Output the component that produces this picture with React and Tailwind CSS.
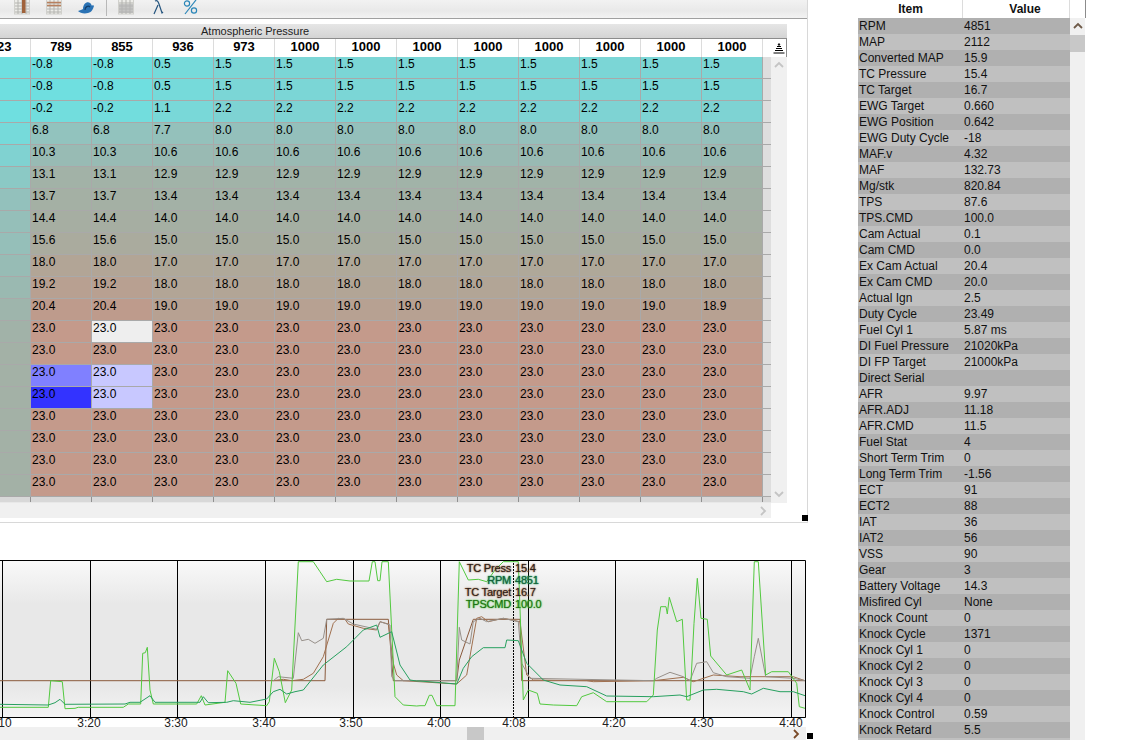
import React from 'react'

const FONT = 'font-["Liberation_Sans",Arial,sans-serif]'

const headers = [789, 855, 936, 973, 1000, 1000, 1000, 1000, 1000, 1000, 1000, 1000]

// [col 789/855, col 936, rest of the row]
const rows = [
    [-0.8, 0.5, 1.5],
    [-0.8, 0.5, 1.5],
    [-0.2, 1.1, 2.2],
    [6.8, 7.7, 8.0],
    [10.3, 10.6, 10.6],
    [13.1, 12.9, 12.9],
    [13.7, 13.4, 13.4],
    [14.4, 14.0, 14.0],
    [15.6, 15.0, 15.0],
    [18.0, 17.0, 17.0],
    [19.2, 18.0, 18.0],
    [20.4, 19.0, 19.0],
    [23.0, 23.0, 23.0],
    [23.0, 23.0, 23.0],
    [23.0, 23.0, 23.0],
    [23.0, 23.0, 23.0],
    [23.0, 23.0, 23.0],
    [23.0, 23.0, 23.0],
    [23.0, 23.0, 23.0],
    [23.0, 23.0, 23.0],
]

const leftCol = [-0.8, -0.8, -0.8, 0.6, 2.6, 5.2, 7.6, 8.6, 8.4, 10, 11, 12, 13, 13.4, 13.4, 13.4, 13.4, 13.4, 13.4, 13.4]

const stops = [
    [-0.8, 111, 223, 224],
    [1.5, 123, 214, 214],
    [6.8, 146, 195, 190],
    [10.3, 152, 187, 180],
    [14, 165, 175, 163],
    [18, 178, 165, 150],
    [20.4, 190, 155, 140],
    [23, 196, 154, 139],
]

function heat(v) {
    for (let i = 1; i < stops.length; i++) {
        if (v <= stops[i][0]) {
            const a = stops[i - 1]
            const b = stops[i]
            const t = (v - a[0]) / (b[0] - a[0])
            const c = [1, 2, 3].map((k) => Math.round(a[k] + (b[k] - a[k]) * t))
            return `rgb(${c.join(',')})`
        }
    }
    return 'rgb(196,154,139)'
}

const selected = {
    '12-1': '#eeeeee',
    '14-0': '#8080ff',
    '14-1': '#c8c8ff',
    '15-0': '#3333ff',
    '15-1': '#c8c8ff',
}

const items = [
    ['RPM', '4851'], ['MAP', '2112'], ['Converted MAP', '15.9'], ['TC Pressure', '15.4'],
    ['TC Target', '16.7'], ['EWG Target', '0.660'], ['EWG Position', '0.642'], ['EWG Duty Cycle', '-18'],
    ['MAF.v', '4.32'], ['MAF', '132.73'], ['Mg/stk', '820.84'], ['TPS', '87.6'],
    ['TPS.CMD', '100.0'], ['Cam Actual', '0.1'], ['Cam CMD', '0.0'], ['Ex Cam Actual', '20.4'],
    ['Ex Cam CMD', '20.0'], ['Actual Ign', '2.5'], ['Duty Cycle', '23.49'], ['Fuel Cyl 1', '5.87 ms'],
    ['DI Fuel Pressure', '21020kPa'], ['DI FP Target', '21000kPa'], ['Direct Serial', ''], ['AFR', '9.97'],
    ['AFR.ADJ', '11.18'], ['AFR.CMD', '11.5'], ['Fuel Stat', '4'], ['Short Term Trim', '0'],
    ['Long Term Trim', '-1.56'], ['ECT', '91'], ['ECT2', '88'], ['IAT', '36'],
    ['IAT2', '56'], ['VSS', '90'], ['Gear', '3'], ['Battery Voltage', '14.3'],
    ['Misfired Cyl', 'None'], ['Knock Count', '0'], ['Knock Cycle', '1371'], ['Knock Cyl 1', '0'],
    ['Knock Cyl 2', '0'], ['Knock Cyl 3', '0'], ['Knock Cyl 4', '0'], ['Knock Control', '0.59'],
    ['Knock Retard', '5.5'],
]

// chart traces, read off 3x crops: a = left crop (x 0), b = right crop (x 420)
const toPoints = (a, b) =>
    [
        ...a.map(([x, y]) => `${(x / 3).toFixed(1)},${(550 + y / 3).toFixed(1)}`),
        ...b.map(([x, y]) => `${(420 + x / 3).toFixed(1)},${(550 + y / 3).toFixed(1)}`),
    ].join(' ')

const tpsLine = toPoints(
    [[0, 472], [145, 472], [152, 392], [187, 395], [195, 476], [225, 475], [235, 472], [370, 472], [385, 462], [422, 462], [428, 310], [436, 308], [442, 292], [450, 420], [460, 462], [590, 462], [604, 437], [615, 465], [675, 457], [683, 362], [708, 400], [722, 462], [800, 467], [808, 455], [823, 325], [838, 365], [856, 458], [875, 420], [895, 35], [940, 35], [960, 65], [980, 95], [1010, 88], [1050, 93], [1107, 93], [1117, 35], [1125, 35], [1133, 92], [1140, 92], [1146, 35], [1165, 35], [1185, 440], [1210, 465], [1250, 468]],
    [[0, 467], [15, 467], [28, 436], [36, 436], [50, 467], [105, 467], [118, 35], [145, 90], [175, 88], [200, 95], [225, 60], [250, 35], [295, 35], [310, 450], [325, 420], [352, 430], [360, 462], [400, 465], [470, 467], [485, 440], [520, 428], [560, 455], [680, 455], [700, 435], [712, 240], [722, 170], [738, 170], [742, 192], [748, 142], [770, 215], [787, 208], [800, 450], [810, 450], [822, 220], [832, 85], [843, 205], [862, 208], [872, 318], [920, 375], [965, 360], [990, 420], [1003, 35], [1015, 35], [1037, 375], [1055, 365], [1105, 365], [1130, 400], [1138, 470], [1155, 475]],
)

const rpmLine = toPoints(
    [[0, 463], [145, 465], [165, 458], [180, 448], [195, 463], [375, 462], [390, 457], [420, 457], [450, 437], [465, 457], [600, 457], [610, 440], [625, 458], [680, 457], [700, 452], [750, 457], [800, 447], [820, 425], [840, 418], [860, 432], [885, 425], [910, 420], [970, 345], [1040, 290], [1090, 240], [1130, 225], [1140, 262], [1175, 245], [1200, 345], [1230, 390], [1250, 393]],
    [[0, 393], [110, 402], [130, 355], [155, 320], [190, 293], [255, 293], [260, 270], [295, 272], [320, 340], [370, 390], [420, 405], [500, 410], [560, 438], [700, 440], [780, 435], [800, 440], [850, 420], [890, 418], [970, 425], [995, 432], [1030, 415], [1080, 425], [1120, 425], [1155, 437]],
)

const targetLine = toPoints(
    [[0, 392], [975, 392], [980, 208], [1165, 208], [1180, 392], [1250, 392]],
    [[0, 392], [110, 392], [118, 330], [160, 208], [300, 208], [305, 392], [1155, 392]],
)

const pressLine = toPoints(
    [[820, 392], [835, 380], [880, 385], [895, 248], [905, 272], [925, 268], [945, 280], [970, 265], [980, 208], [1030, 205], [1060, 222], [1130, 238], [1140, 215], [1170, 225], [1175, 380], [1185, 392]],
    [[110, 392], [118, 232], [125, 270], [150, 282], [160, 215], [180, 205], [200, 215], [250, 205], [295, 215], [305, 340], [330, 385], [700, 392], [710, 385], [750, 367], [790, 380], [810, 392], [830, 340], [860, 335], [880, 368], [920, 380], [990, 385], [1003, 320], [1015, 265], [1037, 380], [1120, 385], [1155, 392]],
)

const actualLine = toPoints(
    [[820, 392], [850, 388], [875, 392], [910, 388], [940, 370], [970, 320], [1000, 220], [1015, 205], [1035, 208], [1045, 222], [1090, 235], [1130, 240], [1140, 215], [1165, 222], [1180, 340], [1190, 375], [1210, 392]],
    [[110, 402], [140, 375], [170, 205], [185, 200], [205, 215], [250, 205], [300, 215], [320, 375], [340, 390], [500, 392], [520, 395], [700, 392], [790, 382], [820, 395], [880, 375], [960, 380], [1120, 380], [1155, 392]],
)

const gridX = [2.5, 90.5, 177.5, 265.5, 353.5, 440.5, 528.5, 615.5, 703.5, 791.5]
const axisLabels = [[5, '10'], [89, '3:20'], [176, '3:30'], [264, '3:40'], [351, '3:50'], [439, '4:00'], [514, '4:08'], [614, '4:20'], [702, '4:30'], [791, '4:40']]

function Chevron({ dir = 'up', className = '' }) {
    const d = { up: 'M1 6 L5 2 L9 6', down: 'M1 2 L5 6 L9 2', right: 'M2 1 L6 5 L2 9' }[dir]
    return (
        <svg width="10" height="10" viewBox="0 0 10 10" className={className}>
            <path d={d} fill="none" stroke="currentColor" strokeWidth="1.8" />
        </svg>
    )
}

function GridIcon({ children }) {
    return (
        <svg width="16" height="15" viewBox="0 0 16 15">
            <rect x="0.5" y="-2" width="15" height="16" fill="#ecece8" stroke="#d0d0cc" />
            <path d="M1 3H15M1 6H15M1 9H15M1 12H15M4 0V14M8 0V14M12 0V14" stroke="#b4b4b0" strokeWidth="1" />
            {children}
        </svg>
    )
}

function Toolbar() {
    return (
        <div className="flex h-[19px] shrink-0 items-start border-b border-[#a0a0a0] bg-[linear-gradient(#f2f2f2,#e9e9e9_60%,#f3f3f3)]">
            <div className="ml-[14px]">
                <GridIcon>
                    <rect x="8" y="0" width="3.5" height="13" fill="#a0623a" />
                </GridIcon>
            </div>
            <div className="ml-[16px]">
                <GridIcon>
                    <path d="M1 2.5H15M1 5.5H15" stroke="#b8805e" strokeWidth="1.4" />
                </GridIcon>
            </div>
            <svg width="16" height="15" viewBox="0 0 16 15" className="ml-[16px]">
                <path d="M0 11 C2 10 4 10 5 9 C5 4 9 1 12 3 C14 4 13 7 15 5 L16 6 C15 9 14 12 10 13 C6 14 2 13 0 11Z" fill="#2a72b4" />
                <path d="M7 10 C7 7 10 5 12 7" fill="none" stroke="#123f6e" strokeWidth="1.2" />
            </svg>
            <div className="ml-[12px] h-[16px] w-px bg-[#b8b8b8]" />
            <div className="ml-[11px]">
                <GridIcon>
                    <rect x="1" y="4" width="14" height="9" fill="#b4b4b4" opacity="0.7" />
                </GridIcon>
            </div>
            <svg width="11" height="15" viewBox="0 0 11 15" className="ml-[19px]">
                <path d="M2 1 C4 0 5 1 6 4 L9 13 L10 12 M5 5 L1 14" fill="none" stroke="#24547e" strokeWidth="1.2" />
            </svg>
            <svg width="15" height="15" viewBox="0 0 15 15" className="ml-[19px]">
                <path d="M13 0 L2 14" stroke="#2a86b8" strokeWidth="1.2" />
                <circle cx="4" cy="3.5" r="2.6" fill="none" stroke="#2a86b8" strokeWidth="1.2" />
                <circle cx="11" cy="10.5" r="2.6" fill="none" stroke="#2a86b8" strokeWidth="1.2" />
            </svg>
        </div>
    )
}

function PressureTable() {
    return (
        <div className="mt-[5px] w-[787px]">
            <div className="h-[15px] border-b border-[#8c8c8c] bg-[linear-gradient(#e6e6e6,#d4d4d4)] pl-[201px] text-[11px] leading-[14px] text-[#222]">
                Atmospheric Pressure
            </div>
            <div className="flex h-[18px] bg-white text-[13px] font-bold leading-[16px] text-black">
                <div className="w-[31px] overflow-hidden border-r border-[#dcdcdc]">
                    <span className="-ml-[3px] block">23</span>
                </div>
                {headers.map((h, i) => (
                    <div key={i} className="w-[61px] border-r border-[#dcdcdc] text-center">
                        {h}
                    </div>
                ))}
                <div className="w-[8px]" />
                <div className="flex w-[16px] items-center justify-center border-r border-[#8c8c8c]">
                    <svg width="12" height="11" viewBox="0 0 12 11">
                        <path d="M6 0.5L7 2H5ZM4 3.5H8M3 5.5H9M2 7.5H10M0.5 10H11.5" stroke="#000" strokeWidth="1" fill="none" />
                    </svg>
                </div>
            </div>
            <div className="flex">
                <div className="w-[771px]">
                    {rows.map((row, r) => (
                        <div key={r} className="flex h-[22px] text-[12px] leading-[14px] text-black">
                            <div
                                className="w-[31px] border-r border-b border-[#a9a9a9]"
                                style={{ backgroundColor: heat(leftCol[r]) }}
                            />
                            {headers.map((_, c) => {
                                const v = c < 2 ? row[0] : c === 2 ? row[1] : r === 11 && c === 11 ? 18.9 : row[2]
                                return (
                                    <div
                                        key={c}
                                        className="w-[61px] border-r border-b border-[#a9a9a9] pl-[1px]"
                                        style={{ backgroundColor: selected[`${r}-${c}`] || heat(v) }}
                                    >
                                        {v.toFixed(1)}
                                    </div>
                                )
                            })}
                            <div className="w-[8px] border-b border-[#a9a9a9] bg-[#dedede]" />
                        </div>
                    ))}
                    <div className="flex h-[6px] border-b border-[#e8e8e8] bg-[#d8d8d8]">
                        <div className="h-[5px] w-[31px] border-r border-[#909090]" />
                        {headers.map((_, c) => (
                            <div key={c} className="h-[5px] w-[61px] border-r border-[#909090]" />
                        ))}
                    </div>
                    <div className="flex h-[15px] items-center justify-end bg-[#f0f0f0] pr-[2px] text-[#c4c4c4]">
                        <Chevron dir="right" />
                    </div>
                </div>
                <div className="flex h-[446px] w-[16px] flex-col items-center justify-between bg-[#f0f0f0] pt-[4px] pb-[3px] text-[#c4c4c4]">
                    <Chevron dir="up" />
                    <Chevron dir="down" />
                </div>
            </div>
        </div>
    )
}

function Chart() {
    return (
        <div className="relative h-[180px] w-[812px]">
            <svg width="806" height="170" viewBox="0 560 806 170" className="block">
                <defs>
                    <linearGradient id="plotBg" x1="0" y1="0" x2="0" y2="1">
                        <stop offset="0" stopColor="#f9f9f9" />
                        <stop offset="0.28" stopColor="#e8e8e8" />
                        <stop offset="0.8" stopColor="#e8e8e8" />
                        <stop offset="1" stopColor="#f4f4f4" />
                    </linearGradient>
                </defs>
                <rect x="0" y="560" width="806" height="158" fill="url(#plotBg)" />
                {gridX.map((x) => (
                    <line key={x} x1={x} x2={x} y1="560" y2="717" stroke="#000" />
                ))}
                <line x1="513.5" x2="513.5" y1="560" y2="717" stroke="#000" strokeDasharray="2 1" />
                <polyline points={targetLine} fill="none" stroke="#8a5a3c" strokeWidth="1" />
                <polyline points={actualLine} fill="none" stroke="#a0704f" strokeWidth="1" />
                <polyline points={pressLine} fill="none" stroke="#97908a" strokeWidth="1" />
                <polyline points={tpsLine} fill="none" stroke="#52c93f" strokeWidth="1" />
                <polyline points={rpmLine} fill="none" stroke="#27a05f" strokeWidth="1" />
                <path d="M0 560.5H805.5V717.5H0" fill="none" stroke="#000" />
                {axisLabels.map(([x, label]) => (
                    <text key={label} x={x} y="727" textAnchor="middle" fontSize="12" fill="#222">
                        {label}
                    </text>
                ))}
            </svg>
            {/* legend sits over the plot */}
            <div className="absolute top-[2px] left-[440px] grid grid-cols-[71px_auto] gap-x-[4px] text-[11px] leading-[12px] tracking-[-0.2px] text-[#2c2018]">
                <span className="text-right [text-shadow:0_0_1px_#8a5a3c,0_0_2px_#8a5a3c]">TC Press</span>
                <span className="[text-shadow:0_0_1px_#8a5a3c,0_0_2px_#8a5a3c]">15.4</span>
                <span className="text-right text-[#14603a] [text-shadow:0_0_1px_#27a05f,0_0_2px_#27a05f]">RPM</span>
                <span className="text-[#14603a] [text-shadow:0_0_1px_#27a05f,0_0_2px_#27a05f]">4851</span>
                <span className="text-right [text-shadow:0_0_1px_#a0704f,0_0_2px_#a0704f]">TC Target</span>
                <span className="[text-shadow:0_0_1px_#a0704f,0_0_2px_#a0704f]">16.7</span>
                <span className="text-right text-[#1f6e14] [text-shadow:0_0_1px_#52c93f,0_0_2px_#52c93f]">TPSCMD</span>
                <span className="text-[#1f6e14] [text-shadow:0_0_1px_#52c93f,0_0_2px_#52c93f]">100.0</span>
            </div>
            <div className="relative -mt-[3px] flex h-[13px] w-[806px] items-center bg-[#f0f0f0]">
                <div className="ml-[467px] h-[13px] w-[17px] bg-[#c8c8c8]" />
                <Chevron dir="right" className="absolute top-[2px] right-[4px] text-[#7a4a28]" />
                <div className="absolute top-[6px] left-[807px] h-[6px] w-[6px] bg-black" />
            </div>
        </div>
    )
}

function DataList() {
    return (
        <div className="flex w-[228px] shrink-0 text-[12px] text-[#111]">
            <div className="w-[212px]">
                <div className="flex h-[18px] bg-white font-bold leading-[18px]">
                    <div className="w-[105px] border-r border-[#dcdcdc] pl-[1px] text-center">Item</div>
                    <div className="w-[107px] border-r border-[#dcdcdc] pl-[18px] text-center">Value</div>
                </div>
                {items.map(([name, value], i) => (
                    <div
                        key={name}
                        className={
                            i % 2 === 0
                                ? 'flex h-[16px] bg-[#b0b0b0] leading-[16px]'
                                : 'flex h-[16px] bg-[#c0c0c0] leading-[16px]'
                        }
                    >
                        <div className="w-[105px] pl-[1px]">{name}</div>
                        <div className="pl-[1px]">{value}</div>
                    </div>
                ))}
                <div className="h-[2px] bg-[#c0c0c0]" />
            </div>
            <div className="w-[16px]">
                <div className="h-[18px] border-r border-[#8c8c8c] bg-white" />
                <div className="flex h-[17px] w-[15px] items-center justify-center bg-[#f0f0f0] text-[#6e5a48]">
                    <Chevron dir="up" />
                </div>
                <div className="h-[705px] w-[15px] bg-[#f0f0f0]">
                    <div className="h-[17px] bg-[#c8c8c8]" />
                </div>
            </div>
        </div>
    )
}

export default function App() {
    return (
        <div className={`flex h-[740px] w-[1141px] overflow-hidden bg-white ${FONT}`}>
            <div className="w-[858px] shrink-0">
                <div className="relative flex h-[523px] w-[808px] flex-col border-r border-b border-[#d8d8d8]">
                    <Toolbar />
                    <PressureTable />
                    <div className="absolute top-[515px] left-[802px] h-[6px] w-[6px] bg-black" />
                </div>
                <div className="h-[37px]" />
                <Chart />
            </div>
            <DataList />
        </div>
    )
}
